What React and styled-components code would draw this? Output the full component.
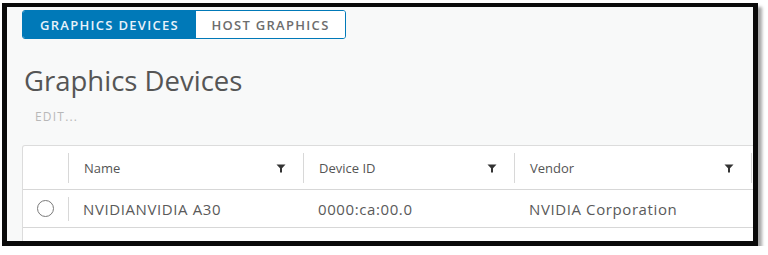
import React from "react";
import styled, { createGlobalStyle } from "styled-components";

const GlobalStyle = createGlobalStyle`
  html, body {
    margin: 0;
    padding: 0;
    background: #fff;
    font-family: "Open Sans", "Noto Sans", sans-serif;
  }
`;

//Frame
const Frame = styled.div`
  margin: 3px 0 0 2px;
  width: 731px;
  height: 231px;
  border: 5px solid #0a0a0a;
  border-top-width: 4px;
  background: #f8f9f9;
  box-shadow: 4px 4px 3px rgba(0, 0, 0, 0.35);
  overflow: hidden;
  padding: 3px 0 0 15px;
  box-sizing: content-box;
  display: flex;
  flex-direction: column;
`;

//Tabs
const Tabs = styled.div`
  display: flex;
  align-self: flex-start;
  height: 27px;
  border: 1px solid #0079b8;
  border-radius: 3px;
  overflow: hidden;
`;

const Tab = styled.div`
  display: flex;
  align-items: center;
  justify-content: center;
  width: ${(p) => p.w}px;
  font-size: 13px;
  font-weight: 600;
  letter-spacing: 1.3px;
  color: ${(p) => (p.active ? "#e8f2fa" : "#6d6d6d")};
  background: ${(p) => (p.active ? "#0079b8" : "#fff")};
`;

//Title
const Title = styled.h1`
  margin: 25px 0 0 2px;
  font-size: 27.5px;
  line-height: 34px;
  font-weight: 400;
  color: #555;
`;

const Edit = styled.div`
  margin: 10px 0 0 13px;
  font-size: 12px;
  letter-spacing: 1.2px;
  color: #b8b8b8;
  height: 16px;
`;

//Table
const Table = styled.div`
  margin-top: 21px;
  width: 800px;
  flex: 1;
  background: #fff;
  border: 1px solid #dcdcdc;
  border-bottom: none;
  border-radius: 3px 0 0 0;
`;

const Row = styled.div`
  display: grid;
  grid-template-columns: 45px 235px 211px 237px 1fr;
  height: ${(p) => p.h}px;
  border-bottom: 1px solid #d7d7d7;
  align-items: center;
`;

const HeadCell = styled.div`
  display: flex;
  align-items: center;
  justify-content: space-between;
  height: 30px;
  padding: 0 17px 0 15px;
  border-left: 1px solid #d8d8d8;
  font-size: 13px;
  color: #555;
`;

const Cell = styled.div`
  display: flex;
  align-items: center;
  padding-left: 15px;
  font-size: 15px;
  letter-spacing: 0.6px;
  color: #5a5a5a;
  height: 100%;
`;

const RadioCell = styled.div`
  display: flex;
  align-items: center;
  justify-content: center;
  height: 24px;
  border-right: 1px solid #d8d8d8;
  margin-right: -1px;
`;

const Radio = styled.div`
  width: 17px;
  height: 17px;
  border: 1.5px solid #7a7a7a;
  border-radius: 50%;
  box-sizing: border-box;
  margin-left: -1px;
`;

const Filter = () => (
  <svg width="10" height="10" viewBox="0 0 10 10">
    <path d="M0.5 1.5 H9.5 L6 5.2 V9.5 H4 V5.2 Z" fill="#333" />
  </svg>
);

function App() {
  return (
    <>
      <GlobalStyle />
      <Frame>
        <Tabs>
          <Tab active w={173}>GRAPHICS DEVICES</Tab>
          <Tab w={149}>HOST GRAPHICS</Tab>
        </Tabs>
        <Title>Graphics Devices</Title>
        <Edit>EDIT...</Edit>
        <Table>
          <Row h={43}>
            <div />
            <HeadCell>
              Name <Filter />
            </HeadCell>
            <HeadCell>
              Device ID <Filter />
            </HeadCell>
            <HeadCell>
              Vendor <Filter />
            </HeadCell>
            <HeadCell />
          </Row>
          <Row h={37}>
            <RadioCell>
              <Radio />
            </RadioCell>
            <Cell>NVIDIANVIDIA A30</Cell>
            <Cell>0000:ca:00.0</Cell>
            <Cell>NVIDIA Corporation</Cell>
            <Cell />
          </Row>
        </Table>
      </Frame>
    </>
  );
}

export default App;
